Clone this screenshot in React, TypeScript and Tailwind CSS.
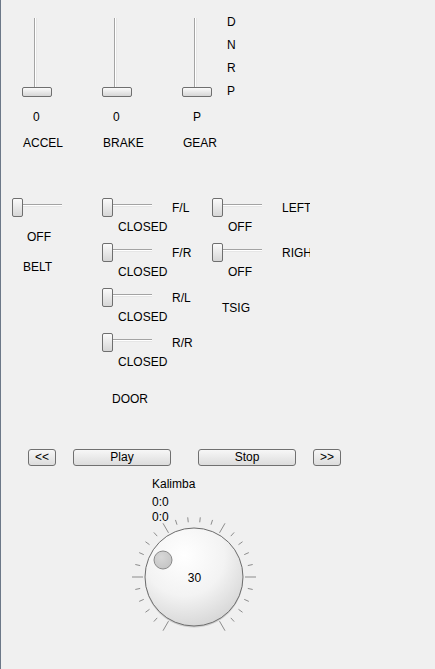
import React from "react";

const VSlider = () => (
  <div className="relative w-[30px] h-[79px]">
    <div className="absolute left-[12px] top-0 h-[72px] w-[3px] border-l border-r border-l-[#a3a3a3] border-r-[#e6e6e6] bg-white" />
    <div className="absolute left-0 bottom-0 h-[10px] w-[30px] rounded-[2px] border border-[#6f6f6f] bg-linear-to-b from-[#fbfbfb] to-[#d6d6d6]" />
  </div>
);

const HSlider = () => (
  <div className="relative w-[50px] h-[19px]">
    <div className="absolute left-[10px] right-0 top-[6px] h-[3px] border-t border-b border-t-[#a3a3a3] border-b-[#e6e6e6] bg-white" />
    <div className="absolute left-0 top-0 h-[19px] w-[11px] rounded-[2px] border border-[#6f6f6f] bg-linear-to-b from-[#fbfbfb] to-[#d6d6d6]" />
  </div>
);

const SlideRow = ({ label, value, first }: { label: string; value: string; first?: boolean }) => (
  <div className={first ? "" : "mt-[9px]"}>
    <div className="flex items-center">
      <HSlider />
      <div className="ml-[20px] w-[28px] overflow-hidden whitespace-nowrap">{label}</div>
    </div>
    <div className="mt-[3px] pl-[16px]">{value}</div>
  </div>
);

const Pedal = ({ value, label }: { value: string; label: string }) => (
  <div className="flex flex-col">
    <VSlider />
    <div className="mt-[13px] pl-[11px]">{value}</div>
    <div className="mt-[12px] pl-[1px]">{label}</div>
  </div>
);

const Btn = ({ w, children, className = "" }: { w: string; children: React.ReactNode; className?: string }) => (
  <button
    className={`${w} ${className} h-[17px] rounded-[3px] border border-[#707070] bg-linear-to-b from-[#f7f7f7] to-[#dcdcdc] text-[12px] leading-[15px] text-black`}
  >
    {children}
  </button>
);

const Knob = () => {
  const cx = 65;
  const cy = 65;
  const ticks = [];
  for (let i = 0; i <= 25; i++) {
    const a = ((-150 + i * 12) * Math.PI) / 180;
    const major = i % 5 === 0;
    const r1 = major ? 51 : 55;
    const r2 = major ? 62 : 60;
    ticks.push(
      <line
        key={i}
        x1={cx + r1 * Math.sin(a)}
        y1={cy - r1 * Math.cos(a)}
        x2={cx + r2 * Math.sin(a)}
        y2={cy - r2 * Math.cos(a)}
        stroke="#8c8c8c"
        strokeWidth={1}
      />
    );
  }
  return (
    <svg width={130} height={130} viewBox="0 0 130 130">
      <defs>
        <radialGradient id="kb" cx="40%" cy="28%" r="75%">
          <stop offset="0%" stopColor="#ffffff" />
          <stop offset="55%" stopColor="#f3f3f3" />
          <stop offset="100%" stopColor="#d6d6d6" />
        </radialGradient>
        <radialGradient id="dm" cx="40%" cy="35%" r="70%">
          <stop offset="0%" stopColor="#d8d8d8" />
          <stop offset="100%" stopColor="#c4c4c4" />
        </radialGradient>
      </defs>
      {ticks}
      <circle cx={cx} cy={cy + 1.5} r={49} fill="#b8b8b8" opacity={0.6} />
      <circle cx={cx} cy={cy} r={49} fill="url(#kb)" stroke="#6c6c6c" strokeWidth={1} />
      <circle cx={34} cy={48} r={9} fill="url(#dm)" stroke="#8a8a8a" strokeWidth={1} />
      <text x={cx + 0.5} y={cy + 4.5} textAnchor="middle" fontSize={12} fontFamily="'Liberation Sans', Arial, sans-serif" fill="#000">
        30
      </text>
    </svg>
  );
};

export default function App() {
  return (
    <div className="w-[435px] h-[669px] overflow-hidden border-l border-[#6c7888] bg-[#f0f0f0] font-['Liberation_Sans',Arial,sans-serif] text-[12px] leading-[14px] text-black">
      {/* pedals and gear */}
      <div className="flex items-start pt-[18px] pl-[21px]">
        <div className="w-[80px]">
          <Pedal value="0" label="ACCEL" />
        </div>
        <div className="w-[80px]">
          <Pedal value="0" label="BRAKE" />
        </div>
        <div className="flex items-start">
          <Pedal value="P" label="GEAR" />
          <div className="ml-[10px] -mt-[7px] flex flex-col leading-[23px]">
            <span>D</span>
            <span>N</span>
            <span>R</span>
            <span>P</span>
          </div>
        </div>
      </div>

      {/* belt, doors, turn signals */}
      <div className="mt-[48px] flex items-start pl-[11px]">
        <div className="w-[90px]">
          <HSlider />
          <div className="mt-[13px] pl-[15px]">OFF</div>
          <div className="mt-[16px] pl-[11px]">BELT</div>
        </div>
        <div className="w-[110px]">
          <SlideRow label="F/L" value="CLOSED" first />
          <SlideRow label="F/R" value="CLOSED" />
          <SlideRow label="R/L" value="CLOSED" />
          <SlideRow label="R/R" value="CLOSED" />
          <div className="mt-[23px] pl-[10px]">DOOR</div>
        </div>
        <div>
          <SlideRow label="LEFT" value="OFF" first />
          <SlideRow label="RIGHT" value="OFF" />
          <div className="mt-[22px] pl-[10px]">TSIG</div>
        </div>
      </div>

      {/* player buttons */}
      <div className="mt-[43px] flex pl-[27px]">
        <Btn w="w-[28px]">&lt;&lt;</Btn>
        <Btn w="w-[98px]" className="ml-[17px]">Play</Btn>
        <Btn w="w-[98px]" className="ml-[27px]">Stop</Btn>
        <Btn w="w-[28px]" className="ml-[17px]">&gt;&gt;</Btn>
      </div>

      {/* track info and volume knob */}
      <div className="mt-[11px] pl-[151px]">
        <div>Kalimba</div>
        <div className="mt-[4px] leading-[14.5px]">0:0</div>
        <div className="leading-[14.5px]">0:0</div>
      </div>
      <div className="-mt-[12px] pl-[128px]">
        <Knob />
      </div>
    </div>
  );
}
